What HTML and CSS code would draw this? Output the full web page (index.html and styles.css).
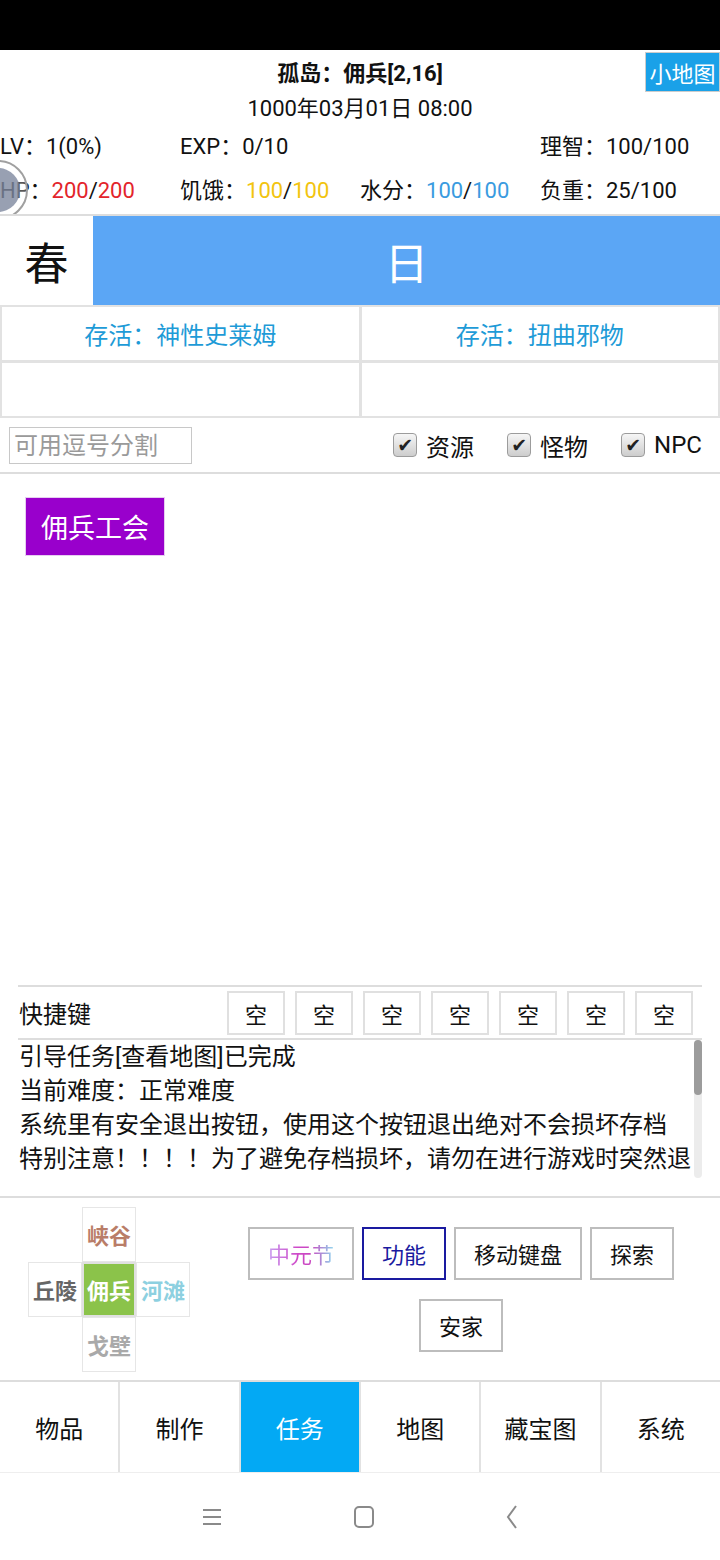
FILE: index.html
```html
<!DOCTYPE html>
<html lang="zh-CN">
<head>
  <meta charset="UTF-8" />
  <meta name="viewport" content="width=device-width, initial-scale=1.0"/>
  <title>孤岛</title>
  <link rel="stylesheet" href="styles.css">
</head>
<body>

  <div class="statusbar"></div>

  <div class="header">
    <div class="title-row">
      <div></div>
      <div class="title">孤岛：佣兵[2,16]</div>
      <div class="minimap-wrap"><button class="minimap">小地图</button></div>
    </div>
    <div class="date">1000年03月01日 08:00</div>
    <div class="stats">
      <div>LV：1(0%)</div>
      <div>EXP：0/10</div>
      <div></div>
      <div>理智：100/100</div>
    </div>
    <div class="stats tall">
      <div>HP：<span class="red">200</span>/<span class="red">200</span></div>
      <div>饥饿：<span class="yellow">100</span>/<span class="yellow">100</span></div>
      <div>水分：<span class="blue">100</span>/<span class="blue">100</span></div>
      <div>负重：25/100</div>
    </div>
    <div class="float-ball"><div class="float-core"></div></div>
  </div>

  <div class="season">
    <div class="season-name">春</div>
    <div class="daytime">日</div>
  </div>

  <div class="quests">
    <div class="quest">存活：神性史莱姆</div>
    <div class="quest">存活：扭曲邪物</div>
    <div class="quest"></div>
    <div class="quest"></div>
  </div>

  <div class="filter">
    <input type="text" class="filter-input" placeholder="可用逗号分割" />
    <div class="checks">
      <label class="check"><span class="box">✔</span>资源</label>
      <label class="check"><span class="box">✔</span>怪物</label>
      <label class="check"><span class="box">✔</span>NPC</label>
    </div>
  </div>

  <div class="stage">
    <button class="npc">佣兵工会</button>
  </div>

  <div class="panel">
    <div class="hotkeys">
      <div class="hotkey-label">快捷键</div>
      <div class="hotkey-list">
        <button class="hotkey">空</button>
        <button class="hotkey">空</button>
        <button class="hotkey">空</button>
        <button class="hotkey">空</button>
        <button class="hotkey">空</button>
        <button class="hotkey">空</button>
        <button class="hotkey">空</button>
      </div>
    </div>
    <div class="log">
      <div class="log-text">
        <div>引导任务[查看地图]已完成</div>
        <div>当前难度：正常难度</div>
        <div>系统里有安全退出按钮，使用这个按钮退出绝对不会损坏存档</div>
        <div>特别注意！！！！为了避免存档损坏，请勿在进行游戏时突然退</div>
      </div>
      <div class="scroll"><div class="thumb"></div></div>
    </div>
  </div>

  <div class="controls">
    <div class="compass">
      <div class="dir empty"></div>
      <div class="dir canyon">峡谷</div>
      <div class="dir empty"></div>
      <div class="dir hills">丘陵</div>
      <div class="dir here">佣兵</div>
      <div class="dir beach">河滩</div>
      <div class="dir empty"></div>
      <div class="dir desert">戈壁</div>
      <div class="dir empty"></div>
    </div>
    <div class="actions">
      <button class="action festival"><span>中元节</span></button>
      <button class="action active">功能</button>
      <button class="action">移动键盘</button>
      <button class="action">探索</button>
      <button class="action">安家</button>
    </div>
  </div>

  <div class="tabs">
    <div class="tab">物品</div>
    <div class="tab">制作</div>
    <div class="tab selected">任务</div>
    <div class="tab">地图</div>
    <div class="tab">藏宝图</div>
    <div class="tab">系统</div>
  </div>

  <div class="navbar">
    <svg width="24" height="24" viewBox="0 0 24 24"><path d="M3 5h18M3 12h18M3 19h18" stroke="#8a8a8a" stroke-width="2" fill="none"/></svg>
    <svg width="24" height="26" viewBox="0 0 24 26"><rect x="3" y="3" width="18" height="20" rx="4" stroke="#8a8a8a" stroke-width="2" fill="none"/></svg>
    <svg width="16" height="26" viewBox="0 0 16 26"><path d="M12 2L4 13l8 11" stroke="#8a8a8a" stroke-width="2" fill="none"/></svg>
  </div>

</body>
</html>
```

FILE: styles.css
```css
body {
  font-family: Roboto, "Noto Sans CJK SC", sans-serif;
  margin: 0;
  background: white;
  color: #111;
  font-size: 22px;
}
button {
  font-family: inherit;
  font-size: 22px;
  background: white;
  cursor: pointer;
}
.statusbar {
  height: 50px;
  background: #000;
}
.header {
  position: relative;
  height: 164px;
  border-bottom: 2px solid #ddd;
  overflow: hidden;
}
.title-row {
  display: grid;
  grid-template-columns: 1fr auto 1fr;
  height: 42px;
  align-items: center;
}
.title {
  font-weight: bold;
  font-size: 22px;
}
.minimap-wrap {
  display: flex;
  justify-content: flex-end;
  align-self: start;
  padding-top: 2px;
}
.minimap {
  height: 40px;
  width: 75px;
  padding: 0;
  border: 1px solid #ccc;
  background: #1aa1e8;
  color: white;
}
.date {
  height: 34px;
  line-height: 34px;
  text-align: center;
}
.stats {
  display: grid;
  grid-template-columns: repeat(4, 180px);
  height: 36px;
  align-items: center;
}
.stats.tall {
  height: 52px;
}
.red { color: #e3242b; }
.yellow { color: #f2c40f; }
.blue { color: #3a9be0; }
.float-ball {
  position: absolute;
  left: -32px;
  top: 110px;
  width: 60px;
  height: 60px;
  box-sizing: border-box;
  border-radius: 50%;
  border: 2px solid #a0a0a0;
  background: rgba(255,255,255,0.3);
  display: flex;
  align-items: center;
  justify-content: center;
}
.float-core {
  width: 44px;
  height: 44px;
  border-radius: 50%;
  background: rgba(112,124,148,0.72);
}
.season {
  display: flex;
  height: 89px;
}
.season-name {
  width: 93px;
  font-size: 44px;
  display: flex;
  align-items: center;
  justify-content: center;
}
.daytime {
  flex: 1;
  background: #5ba6f5;
  color: white;
  font-size: 44px;
  display: flex;
  align-items: center;
  justify-content: center;
}
.quests {
  display: grid;
  grid-template-columns: 1fr 1fr;
  grid-auto-rows: 53px;
  gap: 3px;
  padding: 2px 2px;
  background: #e2e2e2;
}
.quest {
  background: white;
  color: #1e9bd7;
  font-size: 24px;
  display: flex;
  align-items: center;
  justify-content: center;
}
.filter {
  height: 54px;
  border-bottom: 2px solid #ddd;
  display: flex;
  align-items: center;
  justify-content: space-between;
  padding: 0 18px 0 9px;
}
.filter-input {
  width: 183px;
  height: 37px;
  box-sizing: border-box;
  border: 1px solid #c8c8c8;
  font-family: inherit;
  font-size: 24px;
  padding: 0 4px;
  margin-top: 1px;
}
.filter-input::placeholder {
  color: #9a9a9a;
}
.checks {
  display: flex;
  gap: 33px;
}
.check {
  display: flex;
  align-items: center;
  gap: 9px;
  font-size: 24px;
}
.box {
  width: 22px;
  height: 22px;
  border: 1px solid #9c9c9c;
  border-radius: 4px;
  background: linear-gradient(#f6f6f6, #cdcdcd);
  color: #222;
  font-family: "DejaVu Sans", sans-serif;
  font-size: 19px;
  line-height: 22px;
  text-align: center;
}
.stage {
  height: 511px;
  padding: 23px 0 0 25px;
  box-sizing: border-box;
}
.npc {
  width: 140px;
  height: 59px;
  border: 1px solid #e6cdf0;
  background: #9900cc;
  color: white;
  font-size: 27px;
  padding: 0;
}
.panel {
  margin: 0 18px;
  border-top: 2px solid #ddd;
  height: 209px;
}
.hotkeys {
  display: flex;
  align-items: center;
  justify-content: space-between;
  height: 51px;
  border-bottom: 2px solid #ddd;
  padding-left: 1px;
  padding-right: 9px;
  font-size: 24px;
}
.hotkey-list {
  display: flex;
  gap: 10px;
}
.hotkey {
  width: 58px;
  height: 44px;
  padding: 0;
  border: 2px solid #e0e0e0;
  color: #111;
}
.log {
  display: flex;
  height: 138px;
  font-size: 24px;
}
.log-text {
  flex: 1;
  overflow: hidden;
  white-space: nowrap;
  line-height: 34px;
  padding-left: 1px;
}
.scroll {
  width: 8px;
  background: #ececec;
  border-radius: 4px;
}
.thumb {
  height: 55px;
  background: #9c9c9c;
  border-radius: 4px;
}
.controls {
  height: 182px;
  border-top: 2px solid #ddd;
  border-bottom: 2px solid #ddd;
  display: flex;
  align-items: center;
}
.compass {
  display: grid;
  grid-template-columns: repeat(3, 54px);
  grid-template-rows: repeat(3, 55px);
  margin-left: 28px;
  font-size: 22px;
  font-weight: bold;
}
.dir {
  display: flex;
  align-items: center;
  justify-content: center;
  border: 1px solid #e6e6e6;
}
.dir.empty { border-color: transparent; }
.canyon { color: #b97d68; }
.hills { color: #666; }
.here { background: #8bc34a; color: white; border: 2px solid #e0e0e0; }
.beach { color: #8dd0e0; }
.desert { color: #a9a9a9; }
.actions {
  flex: 1;
  display: flex;
  flex-wrap: wrap;
  justify-content: center;
  column-gap: 8px;
  row-gap: 19px;
  padding: 0 0 0 12px;
}
.action {
  height: 53px;
  padding: 0 18px;
  border: 2px solid #bdbdbd;
  color: #111;
}
.action.active {
  border-color: #1a1aa0;
  color: #1a1aa0;
}
.festival span {
  background: linear-gradient(90deg, #c89cf0 0%, #cf48c8 45%, #c848c0 65%, #8fdcf0 100%);
  -webkit-background-clip: text;
  background-clip: text;
  color: transparent;
}
.tabs {
  display: flex;
  height: 90px;
  border-bottom: 1px solid #eee;
}
.tab {
  flex: 1;
  display: flex;
  align-items: center;
  justify-content: center;
  font-size: 24px;
  border-right: 2px solid #e2e2e2;
}
.tab:last-child {
  border-right: none;
}
.tab.selected {
  background: #03a9f4;
  color: white;
}
.navbar {
  height: 87px;
  display: flex;
  align-items: center;
  justify-content: center;
  gap: 128px;
}
```
